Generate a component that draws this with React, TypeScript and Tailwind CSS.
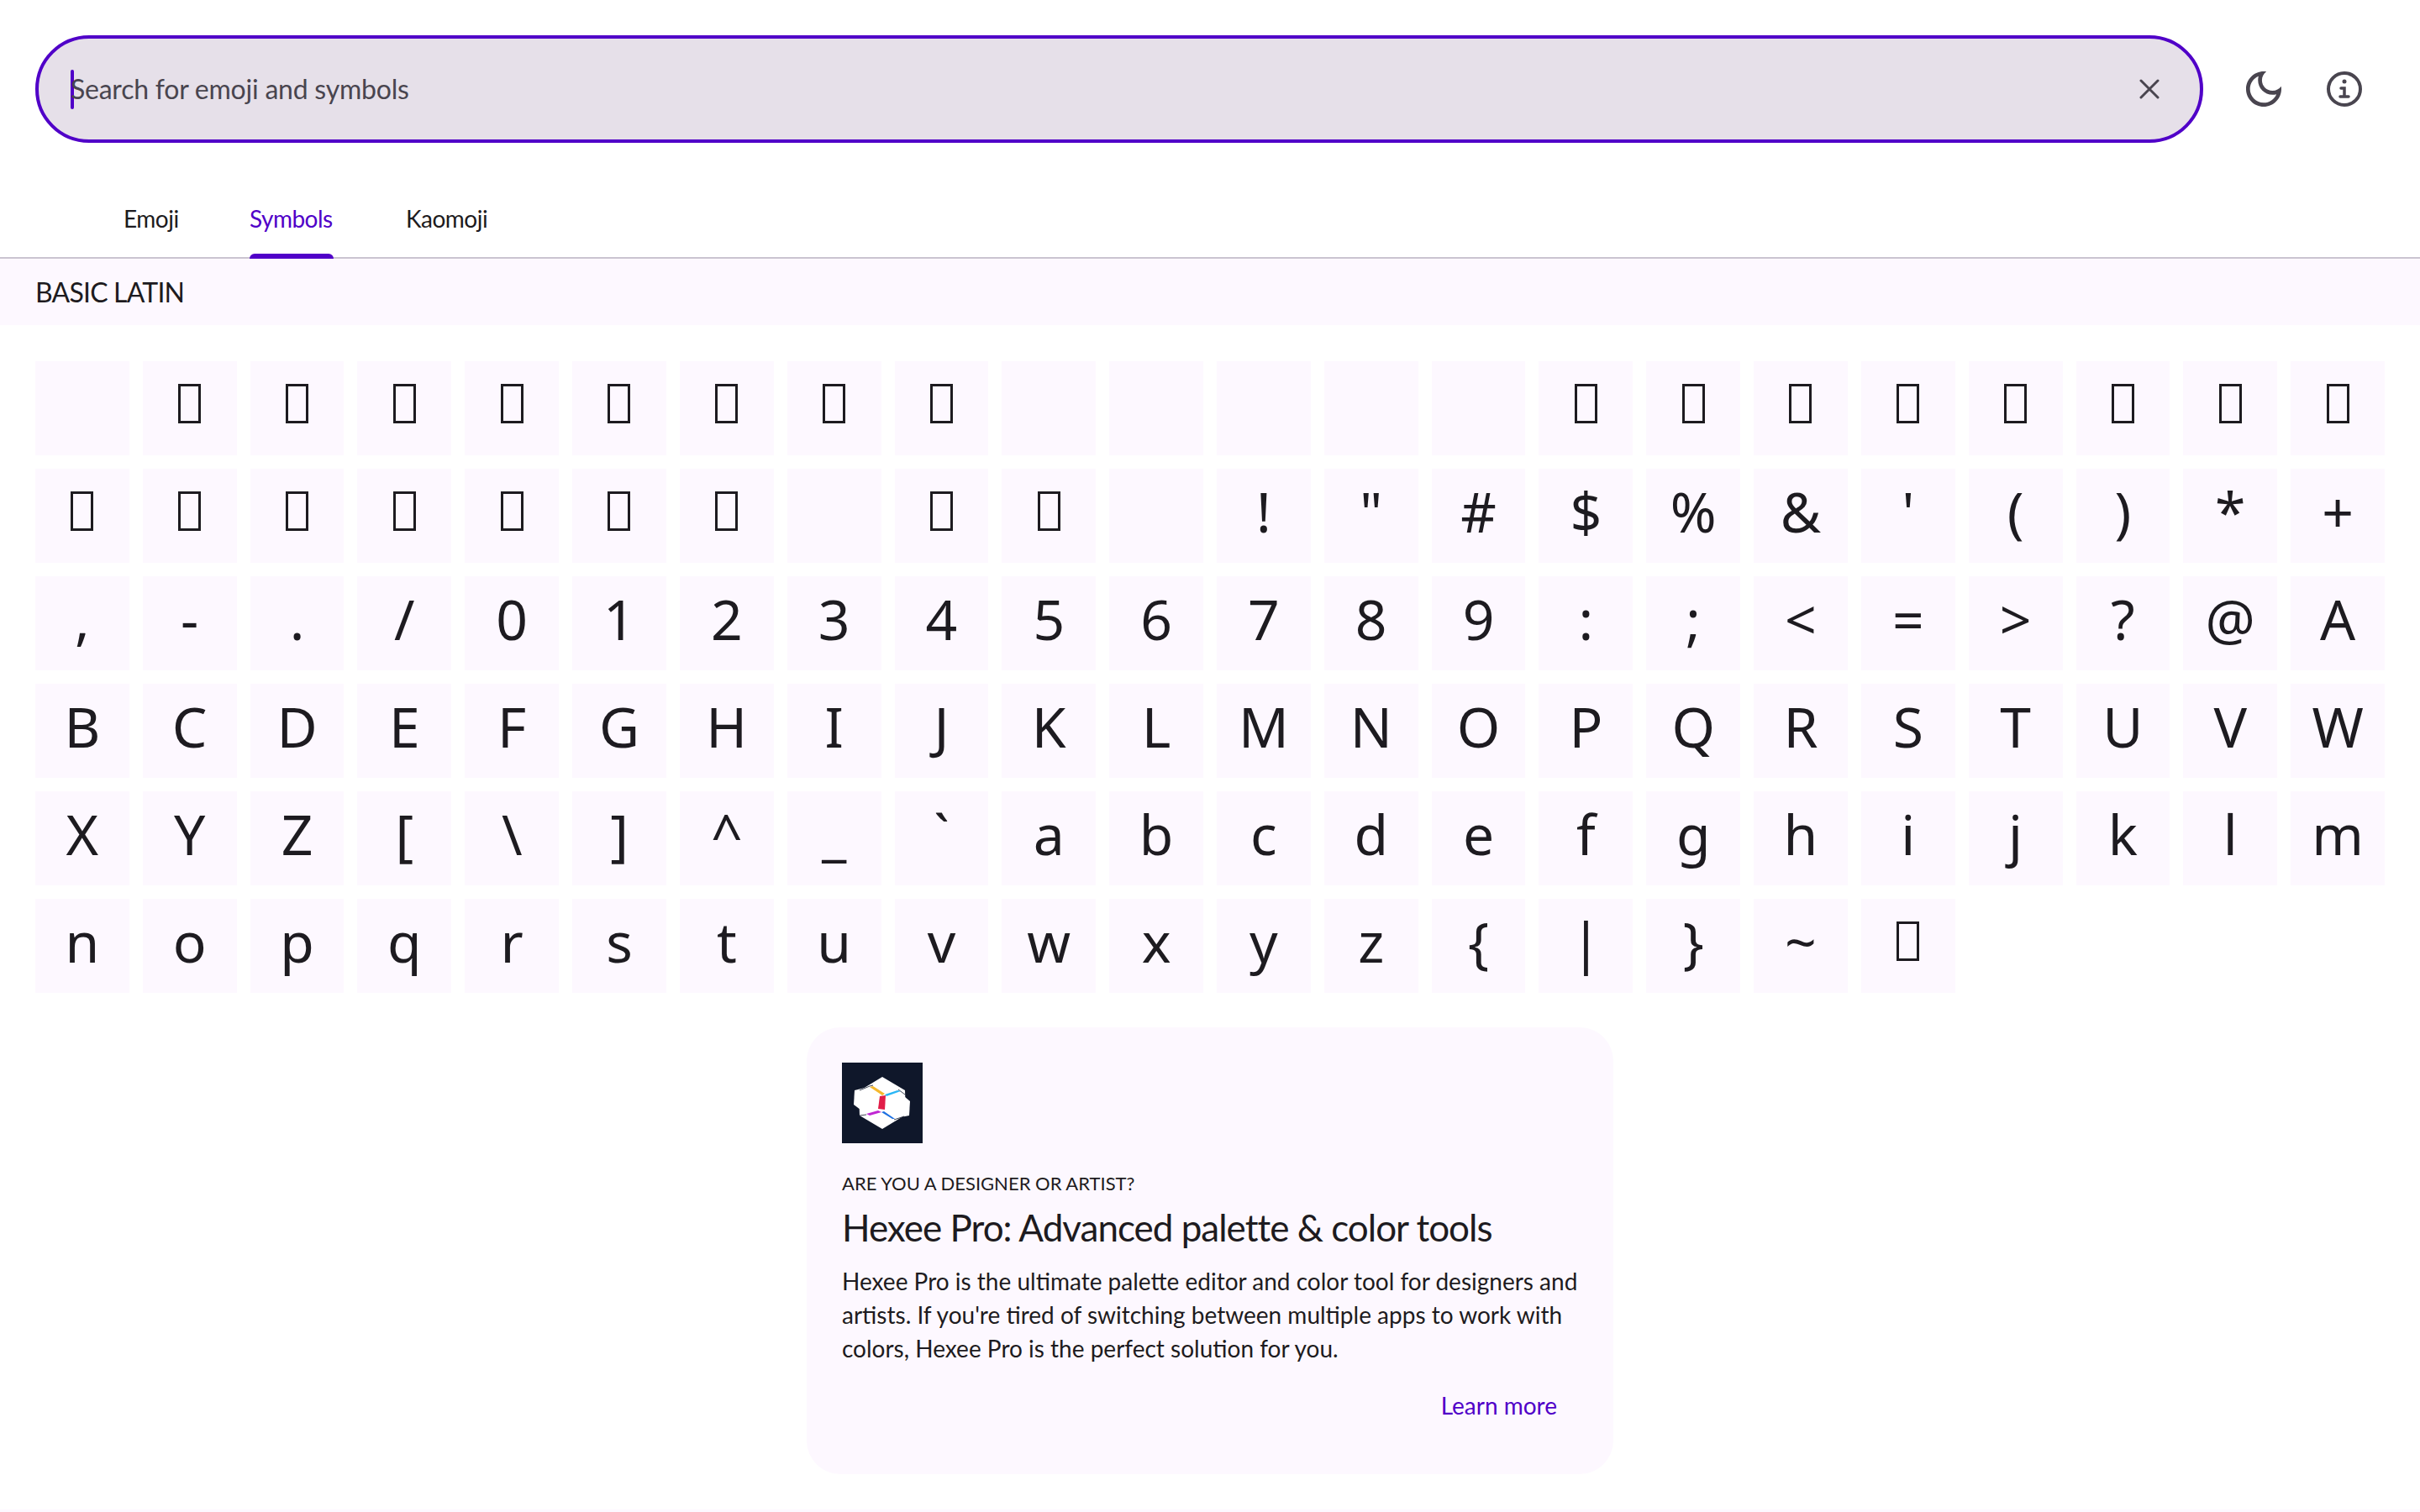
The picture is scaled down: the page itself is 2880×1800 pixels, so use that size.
const box = "\u25AF";
const blank = "";

// rows of the Basic Latin block as shown, control characters fall back to a box
const glyphs: string[] = [
  blank,
  ...Array(8).fill(box),
  ...Array(5).fill(blank),
  ...Array(8).fill(box),
  ...Array(7).fill(box),
  blank,
  box,
  box,
  blank,
  ..."!\"#$%&'()*+,-./0123456789:;<=>?@ABCDEFGHIJKLMNOPQRSTUVWXYZ[\\]^_`abcdefghijklmnopqrstuvwxyz{|}~".split(""),
  box,
];

const Cell = ({ glyph }: { glyph: string }) => {
  return (
    <div className="flex h-[112px] items-center justify-center bg-[#fdf8ff] pb-[12px] font-['Noto_Sans',sans-serif] text-[66px] leading-none text-[#1d1b20]">
      {glyph === box ? (
        <span className="h-[47px] w-[27px] border-[3px] border-[#1d1b20]" />
      ) : (
        glyph
      )}
    </div>
  );
};

const Logo = () => {
  return (
    <svg width="96" height="96" viewBox="0 0 96 96" className="block">
      <rect width="96" height="96" fill="#0f172a" />
      <path d="M48 17 L75 33 L76 62 L48 79 L21 63 L20 34 Z" fill="#fff" strokeLinejoin="round" />
      <path d="M35 28 L48 40 L43 57 L30 62 L14 50 L15 33 Z" fill="#fff" />
      <path d="M68 35 L81 46 L80 63 L65 66 L48 59 L53 38 Z" fill="#fff" />
      <path d="M21 33 L33 28 L37 27 M67 32 L75 38 M21 63 L29 62 M62 68 L74 64" fill="none" stroke="#0f172a" strokeWidth="0.8" />
      <path d="M33 29 L37 28 L51 37 L48 39 Z" fill="#f5b82e" />
      <path d="M51 38 L66 33 L70 34 L53 40 Z" fill="#29b6f6" />
      <path d="M45 40 L52 39 L51 56 L43 55 Z" fill="#e11d48" />
      <path d="M29 61 L43 57 L47 59 L33 63 Z" fill="#c026d3" />
      <path d="M47 59 L50 58 L63 67 L60 67 Z" fill="#1d6fe0" />
    </svg>
  );
};

function App() {
  return (
    <div className="h-[1800px] w-[2880px] overflow-hidden bg-white font-['Lato',sans-serif] text-[#1d1b20]">
      <header className="flex items-center pt-[42px] pl-[42px]">
        <div className="flex h-[128px] w-[2580px] items-center rounded-full border-4 border-[#5000c8] bg-[#e6e0e9] pr-[48px] pl-[38px]">
          <span className="-mr-[4px] h-[47px] w-[4px] rounded-full bg-[#5000c8]" />
          <span className="flex-1 text-[32px] tracking-[-0.23px] text-[#49454f]">
            Search for emoji and symbols
          </span>
          <svg width="24" height="24" viewBox="0 0 24 24" fill="none" stroke="#49454f" strokeWidth="3" strokeLinecap="round">
            <path d="M2 2 L22 22 M22 2 L2 22" />
          </svg>
        </div>
        <button className="ml-[24px] flex h-[96px] w-[96px] items-center justify-center">
          <svg width="56" height="56" viewBox="0 0 24 24" fill="#49454f">
            <path d="M9.37 5.51c-.18.64-.27 1.31-.27 1.99 0 4.08 3.32 7.4 7.4 7.4.68 0 1.35-.09 1.99-.27C17.45 17.19 14.93 19 12 19c-3.86 0-7-3.14-7-7 0-2.93 1.81-5.45 4.37-6.49zM12 3c-4.97 0-9 4.03-9 9s4.03 9 9 9 9-4.03 9-9c0-.46-.04-.92-.1-1.36-.98 1.37-2.58 2.26-4.4 2.26-2.98 0-5.4-2.42-5.4-5.4 0-1.81.89-3.42 2.26-4.4-.44-.06-.9-.1-1.36-.1z" />
          </svg>
        </button>
        <button className="flex h-[96px] w-[96px] items-center justify-center">
          <svg width="44" height="44" viewBox="0 0 44 44" fill="none" stroke="#49454f" strokeWidth="4" strokeLinecap="round">
            <circle cx="22" cy="22" r="19" />
            <circle cx="22" cy="13" r="2.5" fill="#49454f" stroke="none" />
            <path d="M18 21 H22 V31 M17 31 H27" strokeWidth="3.5" />
          </svg>
        </button>
      </header>

      <nav className="flex h-[138px] items-end border-b-2 border-[#cac4d0] pl-[104px] text-[28px] tracking-[-0.5px]">
        <a className="-mb-[2px] flex h-[90px] w-[150px] flex-col px-[43px] text-[#1d1b20]">
          <span className="flex h-[84px] items-center">Emoji</span>
        </a>
        <a className="-mb-[2px] flex h-[90px] w-[186px] flex-col px-[43px] text-[#5000c8]">
          <span className="flex h-[84px] items-center">Symbols</span>
          <span className="h-[6px] rounded-t-[6px] bg-[#5000c8]" />
        </a>
        <a className="-mb-[2px] flex h-[90px] flex-col px-[43px] text-[#1d1b20]">
          <span className="flex h-[84px] items-center">Kaomoji</span>
        </a>
      </nav>

      <h2 className="flex h-[79px] items-center bg-[#fdf8ff] pt-[1px] pl-[42px] text-[32px] font-normal tracking-[-0.8px]">
        BASIC LATIN
      </h2>

      <main className="grid w-[2838px] grid-cols-[repeat(22,1fr)] gap-[16px] pt-[43px] pl-[42px]">
        {glyphs.map((g, i) => (
          <Cell key={i} glyph={g} />
        ))}
      </main>

      <aside className="mx-auto mt-[41px] h-[532px] w-[960px] rounded-[40px] bg-[#fdf8ff] p-[42px]">
        <Logo />
        <p className="mt-[36px] text-[22px] leading-[24px] uppercase">Are you a designer or artist?</p>
        <h3 className="mt-[14px] text-[44px] leading-[52px] tracking-[-1px]">Hexee Pro: Advanced palette &amp; color tools</h3>
        <p className="mt-[18px] text-[28px] leading-[40px]">
          Hexee Pro is the ultimate palette editor and color tool for designers and artists. If you're tired of switching between multiple apps to work with colors, Hexee Pro is the perfect solution for you.
        </p>
        <div className="mt-[28px] flex justify-end pr-[25px]">
          <a className="text-[28px] leading-[40px] text-[#5000c8]">Learn more</a>
        </div>
      </aside>

      <footer className="mt-[42px] h-[3px] bg-[#fdf8ff]" />
    </div>
  );
}

export default App;
